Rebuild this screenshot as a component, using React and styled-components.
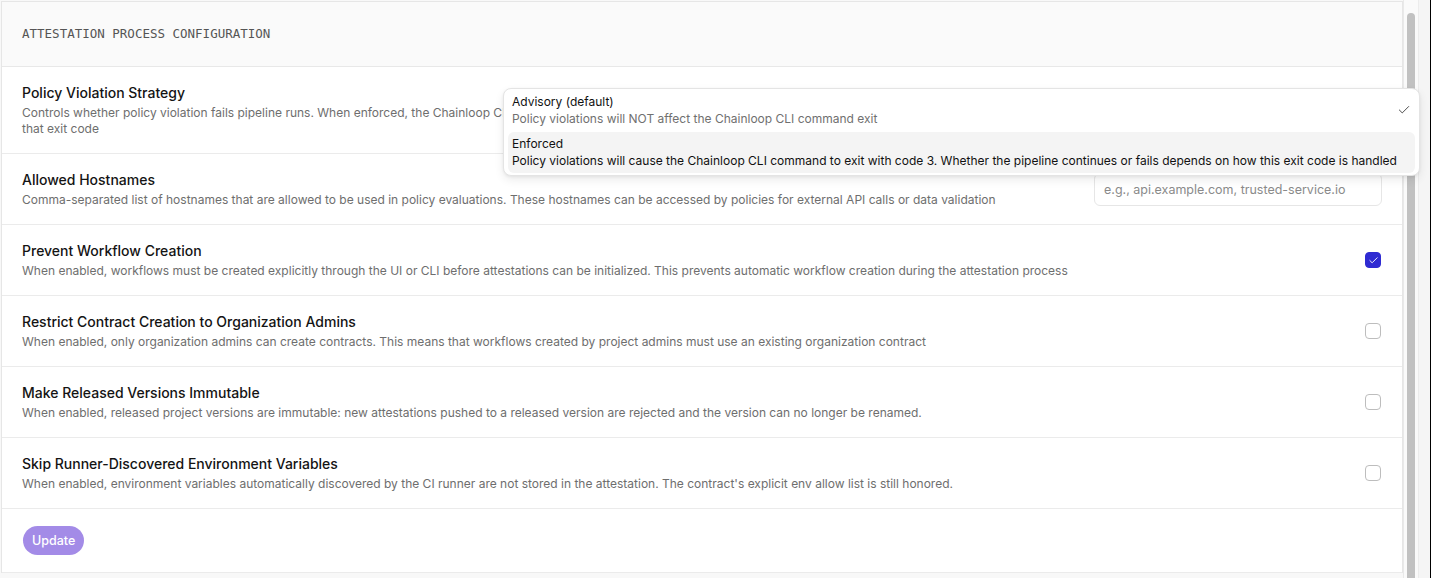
import React from "react";
import styled, { createGlobalStyle } from "styled-components";

const Global = createGlobalStyle`
  html, body { margin: 0; padding: 0; }
  body {
    font-family: Inter, "Noto Sans", sans-serif;
    background: #f7f7f7;
    -webkit-font-smoothing: antialiased;
  }
`;

const Frame = styled.div`
  position: relative;
  display: flex;
  height: 578px;
  overflow: hidden;
  background: #f8f8f8;
`;

const Main = styled.div`
  flex: 1;
  padding: 1px 0 0 1px;
  min-width: 0;
`;

const Card = styled.section`
  background: #fff;
  border: 1px solid #e6e6e6;
  border-bottom: none;
`;

const Header = styled.div`
  background: #fafafa;
  padding: 24px 20px 24px;
  border-bottom: 1px solid #e8e8e8;
  font-family: "DejaVu Sans Mono", "Liberation Mono", monospace;
  font-size: 12.5px;
  line-height: 16px;
  color: #555;
`;

const Row = styled.div`
  display: flex;
  align-items: center;
  gap: 24px;
  padding: 16px 20px 16px 20px;
  border-bottom: 1px solid #ebebeb;
`;

const Info = styled.div`
  flex: 1;
  min-width: 0;
`;

const Title = styled.div`
  font-size: 14px;
  line-height: 20px;
  font-weight: 500;
  color: #141414;
  margin-bottom: 2px;
`;

const Desc = styled.div`
  font-size: 12px;
  line-height: 16px;
  color: #6e6e6e;
`;

const Input = styled.input`
  width: 288px;
  height: 33px;
  box-sizing: border-box;
  border: 1px solid #e6e6e6;
  border-radius: 6px;
  padding: 0 9px;
  font-family: Inter, sans-serif;
  font-size: 12.5px;
  color: #222;
  outline: none;
  &::placeholder { color: #8a8a8a; }
`;

const Check = styled.span`
  flex: none;
  width: 16px;
  height: 16px;
  box-sizing: border-box;
  border-radius: 4px;
  border: 1px solid ${(p) => (p.$on ? "#2f2bd2" : "#bdbdbd")};
  background: ${(p) => (p.$on ? "#2f2bd2" : "#fff")};
  display: flex;
  align-items: center;
  justify-content: center;
  margin-right: 1px;
`;

const SelectSpace = styled.div`
  flex: none;
  width: 200px;
  height: 32px;
`;

const ButtonRow = styled.div`
  padding: 17px 21px 17px;
  border-bottom: 1px solid #ebebeb;
`;

const Button = styled.button`
  height: 29px;
  padding: 0 9px;
  border: none;
  border-radius: 999px;
  background: #a38be7;
  color: #fff;
  font-family: Inter, sans-serif;
  font-size: 12.5px;
  font-weight: 500;
`;

const Track = styled.div`
  flex: none;
  width: 15px;
  box-sizing: border-box;
  border-left: 1px solid #e9e9e9;
  background: #fafafa;
  padding: 13px 0 0 3px;
`;

const Thumb = styled.div`
  width: 8px;
  height: 600px;
  border-radius: 4px;
  background: #c1c1c1;
`;

const Gutter = styled.div`
  flex: none;
  width: 13px;
  box-sizing: border-box;
  border-left: 1px solid #ececec;
  border-right: 1px solid #000;
  background: #f5f5f5;
`;

const Menu = styled.div`
  position: absolute;
  left: 503px;
  top: 88px;
  width: 917px;
  box-sizing: border-box;
  background: #fff;
  border: 1px solid #e4e4e4;
  border-radius: 8px;
  box-shadow: 0 4px 10px rgba(0, 0, 0, 0.08), 0 1px 3px rgba(0, 0, 0, 0.06);
  padding: 1px 4px 2px;
  display: flex;
  flex-direction: column;
  gap: 1px;
`;

const Item = styled.div`
  position: relative;
  padding: 3px 8px 3px 4px;
  border-radius: 6px;
  white-space: nowrap;
  background: ${(p) => (p.$active ? "#f4f4f4" : "transparent")};
`;

const ItemTitle = styled.div`
  font-size: 12px;
  line-height: 17px;
  color: #111;
`;

const ItemDesc = styled.div`
  font-size: 12px;
  line-height: 18px;
  color: ${(p) => (p.$dark ? "#111" : "#707070")};
`;

const Tick = styled.span`
  position: absolute;
  right: 4px;
  top: 13px;
  display: flex;
`;

const toggles = [
  {
    title: "Prevent Workflow Creation",
    desc: "When enabled, workflows must be created explicitly through the UI or CLI before attestations can be initialized. This prevents automatic workflow creation during the attestation process",
    on: true,
  },
  {
    title: "Restrict Contract Creation to Organization Admins",
    desc: "When enabled, only organization admins can create contracts. This means that workflows created by project admins must use an existing organization contract",
  },
  {
    title: "Make Released Versions Immutable",
    desc: "When enabled, released project versions are immutable: new attestations pushed to a released version are rejected and the version can no longer be renamed.",
  },
  {
    title: "Skip Runner-Discovered Environment Variables",
    desc: "When enabled, environment variables automatically discovered by the CI runner are not stored in the attestation. The contract's explicit env allow list is still honored.",
  },
];

const CheckIcon = ({ color, size = 12, width = 1.6 }) => (
  <svg width={size} height={size} viewBox="0 0 24 24" fill="none" stroke={color} strokeWidth={width} strokeLinecap="round" strokeLinejoin="round">
    <path d="M20 6 9 17l-5-5" />
  </svg>
);

export default function App() {
  return (
    <Frame>
      <Global />
      <Main>
        <Card>
          <Header>ATTESTATION PROCESS CONFIGURATION</Header>
          <Row>
            <Info>
              <Title>Policy Violation Strategy</Title>
              <Desc>
                Controls whether policy violation fails pipeline runs. When enforced, the Chainloop CLI will exit with code 3 on violations, and your pipeline decides how to handle
                <br />
                that exit code
              </Desc>
            </Info>
            <SelectSpace />
          </Row>
          <Row>
            <Info>
              <Title>Allowed Hostnames</Title>
              <Desc>
                Comma-separated list of hostnames that are allowed to be used in policy evaluations. These hostnames can be accessed by policies for external API calls or data validation
              </Desc>
            </Info>
            <Input placeholder="e.g., api.example.com, trusted-service.io" />
          </Row>
          {toggles.map((t) => (
            <Row key={t.title}>
              <Info>
                <Title>{t.title}</Title>
                <Desc>{t.desc}</Desc>
              </Info>
              <Check $on={t.on}>{t.on && <CheckIcon color="#fff" size={11} width={2} />}</Check>
            </Row>
          ))}
          <ButtonRow>
            <Button>Update</Button>
          </ButtonRow>
        </Card>
      </Main>
      <Track>
        <Thumb />
      </Track>
      <Gutter />
      <Menu>
        <Item>
          <ItemTitle>Advisory (default)</ItemTitle>
          <ItemDesc>Policy violations will NOT affect the Chainloop CLI command exit</ItemDesc>
          <Tick>
            <CheckIcon color="#333" size={14} width={1.5} />
          </Tick>
        </Item>
        <Item $active>
          <ItemTitle>Enforced</ItemTitle>
          <ItemDesc $dark>
            Policy violations will cause the Chainloop CLI command to exit with code 3. Whether the pipeline continues or fails depends on how this exit code is handled
          </ItemDesc>
        </Item>
      </Menu>
    </Frame>
  );
}
